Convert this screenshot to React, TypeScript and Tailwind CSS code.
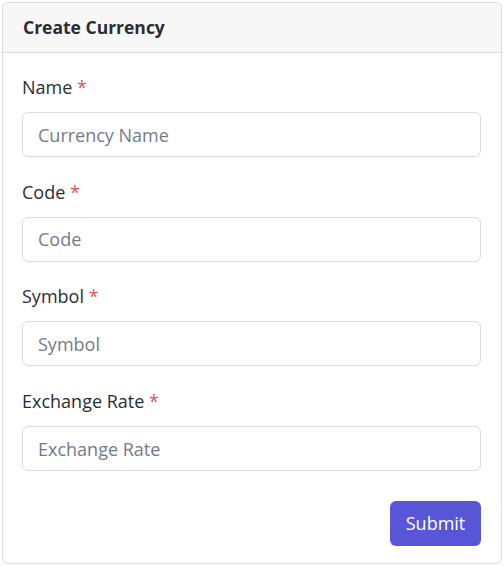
import React, { FC } from "react";

type Field = {
	label: string;
	placeholder: string;
};

const fields: Field[] = [
	{ label: "Name", placeholder: "Currency Name" },
	{ label: "Code", placeholder: "Code" },
	{ label: "Symbol", placeholder: "Symbol" },
	{ label: "Exchange Rate", placeholder: "Exchange Rate" },
];

const FormField: FC<Field> = ({ label, placeholder }) => {
	return (
		<div className="flex flex-col">
			<label className="h-[26px] text-[18px] leading-[26px] text-[#2c2c34]">
				{label} <span className="text-[#e55353]">*</span>
			</label>
			<input
				type="text"
				placeholder={placeholder}
				className="mt-[12px] h-[45px] w-full rounded-[6px] border border-[#d8dbe0] bg-white px-[15px] text-[18px] text-[#2c2c34] outline-none placeholder:text-[#737b8a]"
			/>
		</div>
	);
};

export default function App(): React.ReactElement {
	return (
		<div
			className="p-[2px]"
			style={{ fontFamily: '"Open Sans", "Noto Sans", sans-serif' }}
		>
			<div className="flex h-[562px] w-[500px] flex-col rounded-[6px] border border-[#d8dbe0] bg-white">
				{/* Header */}
				<div className="flex h-[50px] items-center rounded-t-[6px] border-b border-[#d8dbe0] bg-[#f7f7f8] px-[20px]">
					<h2 className="text-[17.5px] font-bold text-[#2c2c34]">Create Currency</h2>
				</div>

				{/* Body */}
				<div className="flex flex-col gap-[21.7px] pl-[19px] pr-[20px] pt-[21px]">
					{fields.map((f) => (
						<FormField key={f.label} label={f.label} placeholder={f.placeholder} />
					))}
				</div>

				<div className="flex justify-end px-[20px] pt-[30px]">
					<button className="h-[45px] w-[91px] rounded-[6px] bg-[#5856d6] text-[18px] text-white">
						Submit
					</button>
				</div>
			</div>
		</div>
	);
}
